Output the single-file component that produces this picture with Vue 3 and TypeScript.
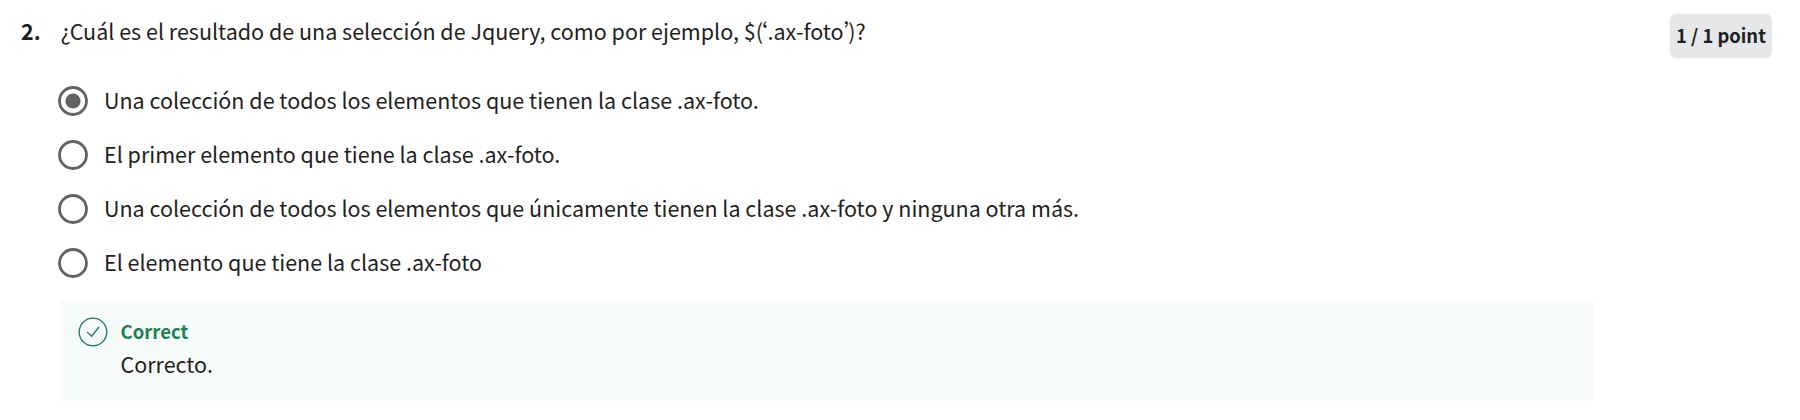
<script setup lang="ts">
interface Option {
  label: string
  selected: boolean
}

const options: Option[] = [
  { label: 'Una colección de todos los elementos que tienen la clase .ax-foto.', selected: true },
  { label: 'El primer elemento que tiene la clase .ax-foto.', selected: false },
  { label: 'Una colección de todos los elementos que únicamente tienen la clase .ax-foto y ninguna otra más.', selected: false },
  { label: 'El elemento que tiene la clase .ax-foto', selected: false },
]
</script>

<template>
  <main class="question">
    <header class="prompt">
      <span class="number">2.</span>
      <p class="text">¿Cuál es el resultado de una selección de Jquery, como por ejemplo, $<span class="open-quote">(‘</span>.ax-foto<span class="close-quote">’</span>)?</p>
      <span class="points">1 / 1 point</span>
    </header>
    <ul class="options">
      <li v-for="option in options" :key="option.label" class="option">
        <svg class="radio" viewBox="0 0 30 30" aria-hidden="true">
          <circle cx="15" cy="15" r="13.5" fill="none" stroke="#636363" stroke-width="2.8" />
          <circle v-if="option.selected" cx="15" cy="15" r="7.6" fill="#636363" />
        </svg>
        <span class="label">{{ option.label }}</span>
      </li>
    </ul>
    <section class="feedback">
      <svg class="check" viewBox="0 0 30 30" aria-hidden="true">
        <circle cx="15" cy="15" r="13.8" />
        <path d="M9 15 13.6 19.2 21 10" />
      </svg>
      <div class="message">
        <strong class="status">Correct</strong>
        <p class="detail">Correcto.</p>
      </div>
    </section>
  </main>
</template>

<style scoped>
.question {
  box-sizing: border-box;
  width: 1800px;
  height: 420px;
  padding: 14px 28px 0 21px;
  background: #fff;
  color: #1f1f1f;
  font: 400 21.5px/32px "Noto Sans CJK SC", "Noto Sans", sans-serif;
}
p, ul { margin: 0; padding: 0; }
.prompt { display: flex; align-items: flex-start; height: 60px; }
.number { width: 39.5px; padding-top: 1px; font-weight: 700; }
.text { flex: 1; padding-top: 1px; }
.open-quote { margin-right: 6.2px; letter-spacing: -6.2px; }
.close-quote { letter-spacing: -6.2px; }
.points {
  box-sizing: border-box;
  width: 102px;
  height: 44px;
  border-radius: 6px;
  background: #e5e7e8;
  font-size: 18.4px;
  font-weight: 700;
  line-height: 43px;
  text-align: center;
  white-space: nowrap;
}
.options { list-style: none; padding: 0 0 0 37.4px; }
.option { display: flex; align-items: center; gap: 15.6px; height: 54px; }
.label { padding-bottom: 3px; }
.radio { width: 30px; height: 30px; flex: none; }
.feedback {
  box-sizing: border-box;
  display: flex;
  gap: 12.5px;
  width: 1533px;
  height: 101px;
  margin: 9.5px 0 0 39px;
  padding: 17.5px 18px;
  background: #f7fbfa;
}
.message { margin-top: -2px; }
.check { width: 30px; height: 30px; flex: none; fill: none; stroke: #1f7f52; stroke-width: 1.3; }
.status { display: block; color: #1f7f52; font-size: 18.5px; line-height: 32px; }
.detail { padding-top: 1px; }
</style>
